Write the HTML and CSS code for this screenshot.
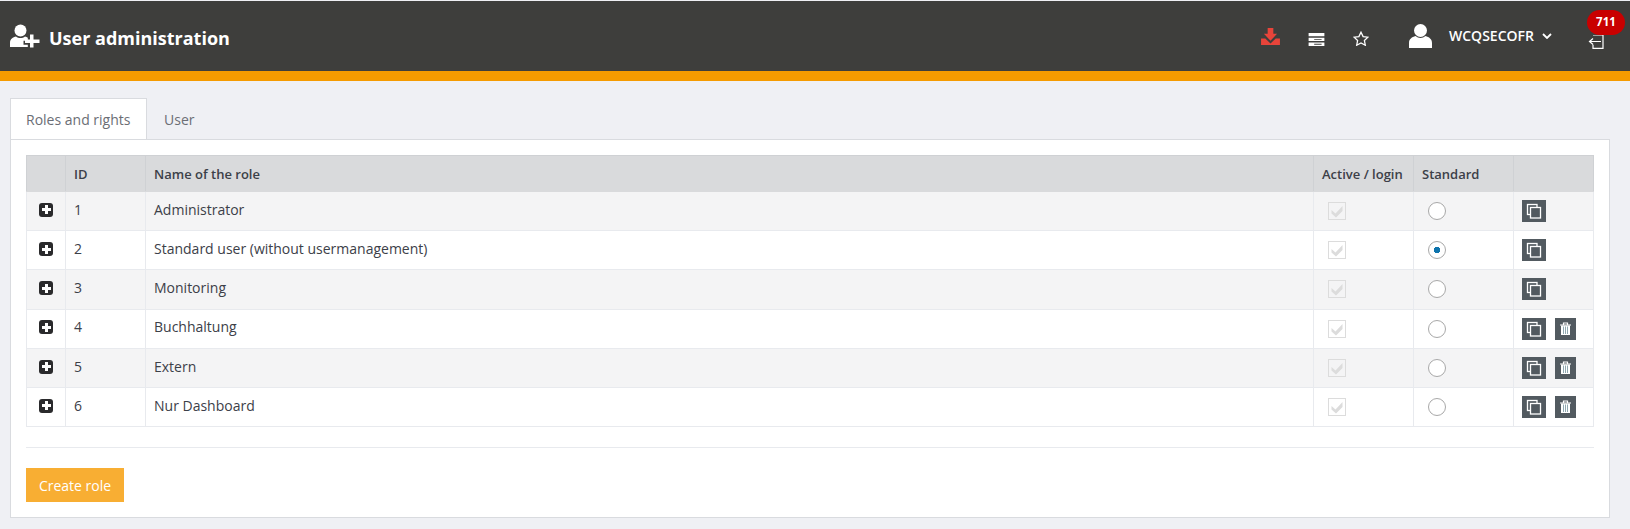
FILE: index.html
```html
<!DOCTYPE html>
<html lang="en">
<head>
<meta charset="utf-8">
<title>User administration</title>
<link rel="stylesheet" href="styles.css">
</head>
<body>
<header class="topbar">
  <div class="brand">
    <svg class="brand-icon" viewBox="0 0 30 24"><circle cx="10.500" cy="6.500" r="6"/><path d="M0 23v-4c0-4 3-6 6-6.500 2.500 2 6.500 2 9 0 1 .2 2 .6 2.800 1.200v3h-4.300v4h4.300V23z"/><path d="M20 10.500h3.500v5h6V19h-6v4.500H20V19h-5v-3.500h5z"/></svg>
    <h1 class="title">User administration</h1>
  </div>
  <nav class="tools">
    <svg class="ic-download" viewBox="0 0 20 18"><path d="M7 0h6v6h4l-7 7.500L3 6h4z"/><path d="M0 11h4.500l5.500 5.500 5.500-5.500H20v7H0z"/></svg>
    <svg class="ic-server" viewBox="0 0 17 14"><path d="M0 0h17v3.500H0zM0 5h17v3.700H0zM0 10.200h17V14H0z"/><path class="cut" d="M6 6.400h8v1H6zM6 11.700h8v1H6z"/></svg>
    <svg class="ic-star" viewBox="0 0 16 15"><path d="M8 1.200l2.100 4.400 4.800.6-3.500 3.300.9 4.700L8 11.900l-4.300 2.300.9-4.700L1.100 6.200l4.800-.6z"/></svg>
    <svg class="ic-user" viewBox="0 0 23 24"><ellipse cx="11.500" cy="6.500" rx="6.500" ry="6.500"/><path d="M0 24v-5c0-4 3-6 6.500-7 3 2.500 7 2.500 10 0 3.500 1 6.500 3 6.500 7v5z"/></svg>
    <span class="username">WCQSECOFR</span>
    <svg class="ic-chevron" viewBox="0 0 10 6"><path d="M1 1l4 4 4-4"/></svg>
    <div class="logout">
      <svg class="ic-logout" viewBox="0 0 16 14"><path d="M5 0h10v13.300H5v-3.500"/><path d="M13 6.500H2M5 3.500L1.500 6.500 5 9.500"/></svg>
      <span class="badge">711</span>
    </div>
  </nav>
</header>
<div class="accent"></div>
<main class="content">
  <div class="tabs">
    <a class="tab tab-active">Roles and rights</a>
    <a class="tab">User</a>
  </div>
  <section class="panel">
    <table class="grid">
      <colgroup>
        <col class="c-exp"><col class="c-id"><col><col class="c-act"><col class="c-std"><col class="c-ops">
      </colgroup>
      <thead>
        <tr><th></th><th>ID</th><th>Name of the role</th><th>Active / login</th><th>Standard</th><th></th></tr>
      </thead>
      <tbody>
        <tr>
          <td class="exp"><span class="plus"></span></td><td class="txt">1</td><td class="txt">Administrator</td>
          <td><span class="check"><svg viewBox="0 0 16 16"><path d="M2.500 7l4 3.500L13.500 3v5L7 14.500 2.500 10.500z"/></svg></span></td>
          <td><span class="radio"></span></td>
          <td class="ops"><span class="btn-copy"><svg viewBox="0 0 24 22"><rect x="5.500" y="4.500" width="9.500" height="10"/><rect x="8.500" y="7.500" width="10" height="10.500"/></svg></span></td>
        </tr>
        <tr>
          <td class="exp"><span class="plus"></span></td><td class="txt">2</td><td class="txt">Standard user (without usermanagement)</td>
          <td><span class="check"><svg viewBox="0 0 16 16"><path d="M2.500 7l4 3.500L13.500 3v5L7 14.500 2.500 10.500z"/></svg></span></td>
          <td><span class="radio radio-on"></span></td>
          <td class="ops"><span class="btn-copy"><svg viewBox="0 0 24 22"><rect x="5.500" y="4.500" width="9.500" height="10"/><rect x="8.500" y="7.500" width="10" height="10.500"/></svg></span></td>
        </tr>
        <tr>
          <td class="exp"><span class="plus"></span></td><td class="txt">3</td><td class="txt">Monitoring</td>
          <td><span class="check"><svg viewBox="0 0 16 16"><path d="M2.500 7l4 3.500L13.500 3v5L7 14.500 2.500 10.500z"/></svg></span></td>
          <td><span class="radio"></span></td>
          <td class="ops"><span class="btn-copy"><svg viewBox="0 0 24 22"><rect x="5.500" y="4.500" width="9.500" height="10"/><rect x="8.500" y="7.500" width="10" height="10.500"/></svg></span></td>
        </tr>
        <tr>
          <td class="exp"><span class="plus"></span></td><td class="txt">4</td><td class="txt">Buchhaltung</td>
          <td><span class="check"><svg viewBox="0 0 16 16"><path d="M2.500 7l4 3.500L13.500 3v5L7 14.500 2.500 10.500z"/></svg></span></td>
          <td><span class="radio"></span></td>
          <td class="ops"><span class="btn-copy"><svg viewBox="0 0 24 22"><rect x="5.500" y="4.500" width="9.500" height="10"/><rect x="8.500" y="7.500" width="10" height="10.500"/></svg></span><span class="btn-trash"><svg viewBox="0 0 21 22"><path class="lid" d="M5 7h11M8.500 6.500V5h4v1.500"/><path class="can" d="M6 7.500h9V17H6z"/><path class="bars" d="M8.500 8.500v7.500M10.500 8.500v7.500M12.500 8.500v7.500"/></svg></span></td>
        </tr>
        <tr>
          <td class="exp"><span class="plus"></span></td><td class="txt">5</td><td class="txt">Extern</td>
          <td><span class="check"><svg viewBox="0 0 16 16"><path d="M2.500 7l4 3.500L13.500 3v5L7 14.500 2.500 10.500z"/></svg></span></td>
          <td><span class="radio"></span></td>
          <td class="ops"><span class="btn-copy"><svg viewBox="0 0 24 22"><rect x="5.500" y="4.500" width="9.500" height="10"/><rect x="8.500" y="7.500" width="10" height="10.500"/></svg></span><span class="btn-trash"><svg viewBox="0 0 21 22"><path class="lid" d="M5 7h11M8.500 6.500V5h4v1.500"/><path class="can" d="M6 7.500h9V17H6z"/><path class="bars" d="M8.500 8.500v7.500M10.500 8.500v7.500M12.500 8.500v7.500"/></svg></span></td>
        </tr>
        <tr>
          <td class="exp"><span class="plus"></span></td><td class="txt">6</td><td class="txt">Nur Dashboard</td>
          <td><span class="check"><svg viewBox="0 0 16 16"><path d="M2.500 7l4 3.500L13.500 3v5L7 14.500 2.500 10.500z"/></svg></span></td>
          <td><span class="radio"></span></td>
          <td class="ops"><span class="btn-copy"><svg viewBox="0 0 24 22"><rect x="5.500" y="4.500" width="9.500" height="10"/><rect x="8.500" y="7.500" width="10" height="10.500"/></svg></span><span class="btn-trash"><svg viewBox="0 0 21 22"><path class="lid" d="M5 7h11M8.500 6.500V5h4v1.500"/><path class="can" d="M6 7.500h9V17H6z"/><path class="bars" d="M8.500 8.500v7.500M10.500 8.500v7.500M12.500 8.500v7.500"/></svg></span></td>
        </tr>
      </tbody>
    </table>
    <hr class="divider">
    <button class="btn-create" type="button">Create role</button>
  </section>
</main>
</body>
</html>
```
FILE: styles.css
```css
* { box-sizing: border-box; }
html, body { margin: 0; height: 100%; }
body {
  background: #eff0f4;
  font-family: "Open Sans", sans-serif;
  font-size: 14px;
  color: #3c4048;
  overflow: hidden;
}
.topbar {
  height: 70px;
  margin-top: 1px;
  background: #3e3e3c;
  display: flex;
  align-items: center;
  justify-content: space-between;
  color: #fff;
}
.brand { display: flex; align-items: center; padding: 0 0 0 10px; }
.brand-icon { width: 30px; height: 24px; fill: #fff; }
.title { margin: 3px 0 0 9px; font-size: 18px; font-weight: 700; line-height: 24px; }
.tools { display: flex; align-items: center; position: relative; width: 369px; height: 24px; }
.ic-download { width: 19px; height: 17px; fill: #e8443a; }
.ic-server { width: 17px; height: 13px; fill: #fff; margin: 6px 0 0 28px; }
.ic-server .cut { fill: #3e3e3c; }
.ic-star { width: 16px; height: 15px; fill: none; stroke: #fff; stroke-width: 1.300; margin: 5px 0 0 28px; }
.ic-user { width: 23px; height: 24px; fill: #fff; margin: 0 0 0 40px; }
.username { margin-left: 17px; font-size: 14px; font-weight: 600; line-height: 18px; }
.ic-chevron { width: 10px; height: 6px; fill: none; stroke: #fff; stroke-width: 1.800; margin: 0 0 0 8px; }
.logout { width: 16px; height: 14px; margin: 12px 0 0 36px; position: relative; }
.ic-logout { display: block; width: 16px; height: 14px; fill: none; stroke: #fff; stroke-width: 1.200; }
.badge {
  position: absolute;
  top: -25px;
  left: -1px;
  width: 38px;
  height: 25px;
  border-radius: 13px;
  background: #c90000;
  color: #fff;
  font-size: 11.500px;
  font-weight: 700;
  line-height: 24px;
  text-align: center;
}
.accent { height: 10px; background: #f59b00; }
.content { padding: 17px 20px 0 10px; }
.tabs { display: flex; height: 41px; position: relative; z-index: 1; }
.tab { display: block; height: 41px; padding: 11px 17px 0 15px; line-height: 22px; font-size: 14px; color: #6b6e75; }
.tab-active {
  width: 137px;
  padding: 10px 0 0 15px;
  background: #fff;
  border: 1px solid #d9dbdf;
  border-bottom: 0;
}
.tab-active + .tab { padding-left: 17px; }
.panel {
  height: 379px;
  background: #fff;
  border: 1px solid #d9dbdf;
  padding: 15px;
}
.grid { width: 100%; table-layout: fixed; border-collapse: collapse; }
.c-exp { width: 39px; }
.c-id { width: 80px; }
.c-act { width: 100px; }
.c-std { width: 100px; }
.c-ops { width: 80px; }
.grid th, .grid td { border: 1px solid #e8eaee; padding: 0 8px; text-align: left; }
.grid th {
  height: 36px;
  background: #d9dadc;
  border-color: #cfd1d4;
  border-bottom-color: #d9dadc;
  font-size: 13px;
  font-weight: 600;
  color: #3c4048;
}
.grid td { height: 39.200px; vertical-align: middle; }
.grid td.txt { padding-bottom: 3.500px; }
.grid tbody tr:nth-child(odd) td { background: #f4f4f5; }
.grid td.exp { text-align: center; padding: 0 0 6px; }
.plus {
  display: inline-block;
  width: 14px;
  height: 14px;
  border-radius: 3px;
  background:
    linear-gradient(#fff, #fff) center / 9px 3px no-repeat,
    linear-gradient(#fff, #fff) center / 3px 9px no-repeat,
    #2a2a2c;
  vertical-align: middle;
}
.check {
  display: block;
  width: 18px;
  height: 18px;
  margin-left: 6px;
  border: 1px solid #dcdcdc;
}
.check svg { display: block; width: 16px; height: 16px; fill: #dcdcdc; }
.radio {
  display: block;
  width: 18px;
  height: 18px;
  margin-left: 6px;
  border: 1px solid #a8a8a8;
  border-radius: 50%;
  background: #fff;
}
.radio-on { background: radial-gradient(circle, #0f74ad 0 3px, #fff 3.500px); }
.ops { font-size: 0; white-space: nowrap; }
.btn-copy, .btn-trash {
  display: inline-block;
  height: 22px;
  background: #525a60;
  vertical-align: middle;
}
.btn-copy { width: 24px; }
.btn-trash { width: 21px; margin-left: 9px; }
.btn-copy svg, .btn-trash svg { display: block; width: 100%; height: 100%; }
.btn-copy rect { fill: #525a60; stroke: #fff; stroke-width: 1.300; }
.btn-trash .lid { fill: none; stroke: #fff; stroke-width: 1.200; }
.btn-trash .can { fill: #fff; }
.btn-trash .bars { fill: none; stroke: #8fa8b0; stroke-width: 1; }
.divider { margin: 20px 0; border: 0; border-top: 1px solid #e8eaee; height: 0; }
.btn-create {
  display: block;
  width: 98px;
  height: 34px;
  border: 0;
  padding: 0;
  background: #f8ae33;
  color: #fff;
  font-family: "Open Sans", sans-serif;
  font-size: 14px;
  text-align: center;
}
```
